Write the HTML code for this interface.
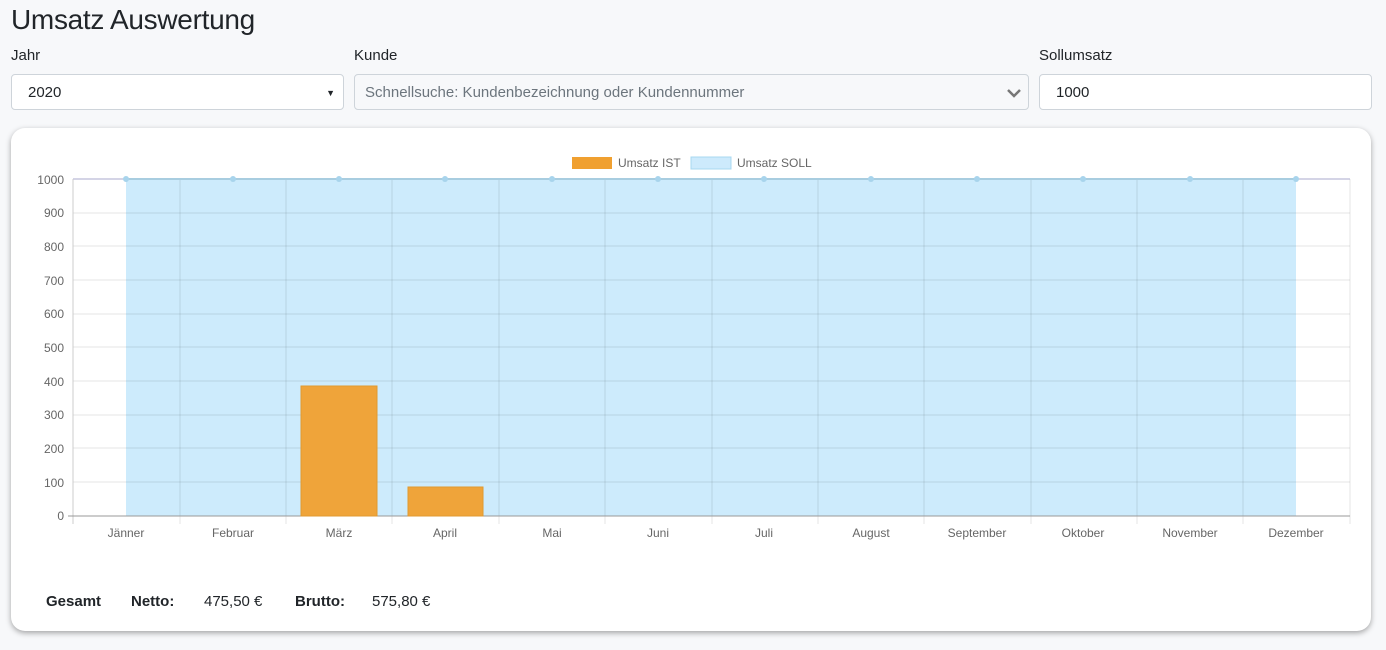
<!DOCTYPE html>
<html><head><meta charset="utf-8"><style>
body{margin:0;background:#f7f8fa;font-family:"Liberation Sans",sans-serif;width:1386px;height:650px;overflow:hidden;position:relative;color:#212529}
h1{position:absolute;left:11px;top:4px;margin:0;font-weight:400;font-size:28px;letter-spacing:-0.3px}
.lbl{position:absolute;top:47px;font-size:15px}
.inp{position:absolute;top:74px;height:36px;border:1px solid #ced4da;border-radius:4px;background:#fff;box-sizing:border-box;font-size:15px;line-height:36px;padding-left:16px}
.card{position:absolute;left:11px;top:128px;width:1360px;height:503px;background:#fff;border-radius:14px;box-shadow:0 2px 6px rgba(0,0,0,.35)}
.tot{position:absolute;top:593px;font-size:15px}
</style></head><body>
<h1>Umsatz Auswertung</h1>
<div class="lbl" style="left:11px">Jahr</div>
<div class="lbl" style="left:354px">Kunde</div>
<div class="lbl" style="left:1039px">Sollumsatz</div>
<div class="inp" style="left:11px;width:333px">2020<span style="position:absolute;right:8px;font-size:9px">▼</span></div>
<div class="inp" style="left:354px;width:675px;background:#f7f8fa;color:#6c757d;padding-left:10px">Schnellsuche: Kundenbezeichnung oder Kundennummer
<svg style="position:absolute;right:6px;top:12px" width="16" height="12" viewBox="0 0 16 12"><path d="M2 3l6 6 6-6" stroke="#777" stroke-width="2.5" fill="none"/></svg></div>
<div class="inp" style="left:1039px;width:333px">1000</div>
<div class="card"></div>
<svg style="position:absolute;left:0;top:0" width="1386" height="650" font-family="Liberation Sans, sans-serif" font-size="12" fill="#666">
<rect x="572" y="157" width="40" height="12" fill="#f0a030"/>
<text x="618" y="167">Umsatz IST</text>
<rect x="691" y="157" width="40" height="12" fill="#cdeafc" stroke="#a8d8f0"/>
<text x="737" y="167">Umsatz SOLL</text>
<rect x="126" y="179" width="1170" height="337" fill="#cdebfc"/>
<g stroke="rgba(0,0,0,.1)">
<line x1="73" x2="1350" y1="213" y2="213"/><line x1="73" x2="1350" y1="246" y2="246"/><line x1="73" x2="1350" y1="280" y2="280"/><line x1="73" x2="1350" y1="314" y2="314"/><line x1="73" x2="1350" y1="347" y2="347"/><line x1="73" x2="1350" y1="381" y2="381"/><line x1="73" x2="1350" y1="415" y2="415"/><line x1="73" x2="1350" y1="448" y2="448"/><line x1="73" x2="1350" y1="482" y2="482"/>
<line x1="180" x2="180" y1="179" y2="524"/><line x1="286" x2="286" y1="179" y2="524"/><line x1="392" x2="392" y1="179" y2="524"/><line x1="499" x2="499" y1="179" y2="524"/><line x1="605" x2="605" y1="179" y2="524"/><line x1="712" x2="712" y1="179" y2="524"/><line x1="818" x2="818" y1="179" y2="524"/><line x1="924" x2="924" y1="179" y2="524"/><line x1="1031" x2="1031" y1="179" y2="524"/><line x1="1137" x2="1137" y1="179" y2="524"/><line x1="1243" x2="1243" y1="179" y2="524"/><line x1="1350" x2="1350" y1="179" y2="524"/>
</g>
<line x1="73" x2="1350" y1="179" y2="179" stroke="#aac" stroke-width="1"/>
<line x1="126" x2="1296" y1="179" y2="179" stroke="#a8cde0" stroke-width="2"/>
<line x1="73" x2="73" y1="179" y2="524" stroke="#ccc"/>
<line x1="68" x2="1350" y1="516" y2="516" stroke="#999"/>
<rect x="301" y="386" width="76" height="130" fill="#efa43a" stroke="#e09a30"/>
<rect x="408" y="487" width="75" height="29" fill="#efa43a" stroke="#e09a30"/>
<g fill="#a8d4ec"><circle cx="126" cy="179" r="3"/><circle cx="233" cy="179" r="3"/><circle cx="339" cy="179" r="3"/><circle cx="445" cy="179" r="3"/><circle cx="552" cy="179" r="3"/><circle cx="658" cy="179" r="3"/><circle cx="764" cy="179" r="3"/><circle cx="871" cy="179" r="3"/><circle cx="977" cy="179" r="3"/><circle cx="1083" cy="179" r="3"/><circle cx="1190" cy="179" r="3"/><circle cx="1296" cy="179" r="3"/></g>
<g text-anchor="end"><text x="64" y="184">1000</text><text x="64" y="217">900</text><text x="64" y="251">800</text><text x="64" y="285">700</text><text x="64" y="318">600</text><text x="64" y="352">500</text><text x="64" y="386">400</text><text x="64" y="419">300</text><text x="64" y="453">200</text><text x="64" y="487">100</text><text x="64" y="520">0</text></g>
<g text-anchor="middle"><text x="126" y="537">Jänner</text><text x="233" y="537">Februar</text><text x="339" y="537">März</text><text x="445" y="537">April</text><text x="552" y="537">Mai</text><text x="658" y="537">Juni</text><text x="764" y="537">Juli</text><text x="871" y="537">August</text><text x="977" y="537">September</text><text x="1083" y="537">Oktober</text><text x="1190" y="537">November</text><text x="1296" y="537">Dezember</text></g>
</svg>
<div class="tot" style="left:46px;font-weight:bold">Gesamt</div>
<div class="tot" style="left:131px;font-weight:bold">Netto:</div>
<div class="tot" style="left:204px">475,50 €</div>
<div class="tot" style="left:295px;font-weight:bold">Brutto:</div>
<div class="tot" style="left:372px">575,80 €</div>
</body></html>
